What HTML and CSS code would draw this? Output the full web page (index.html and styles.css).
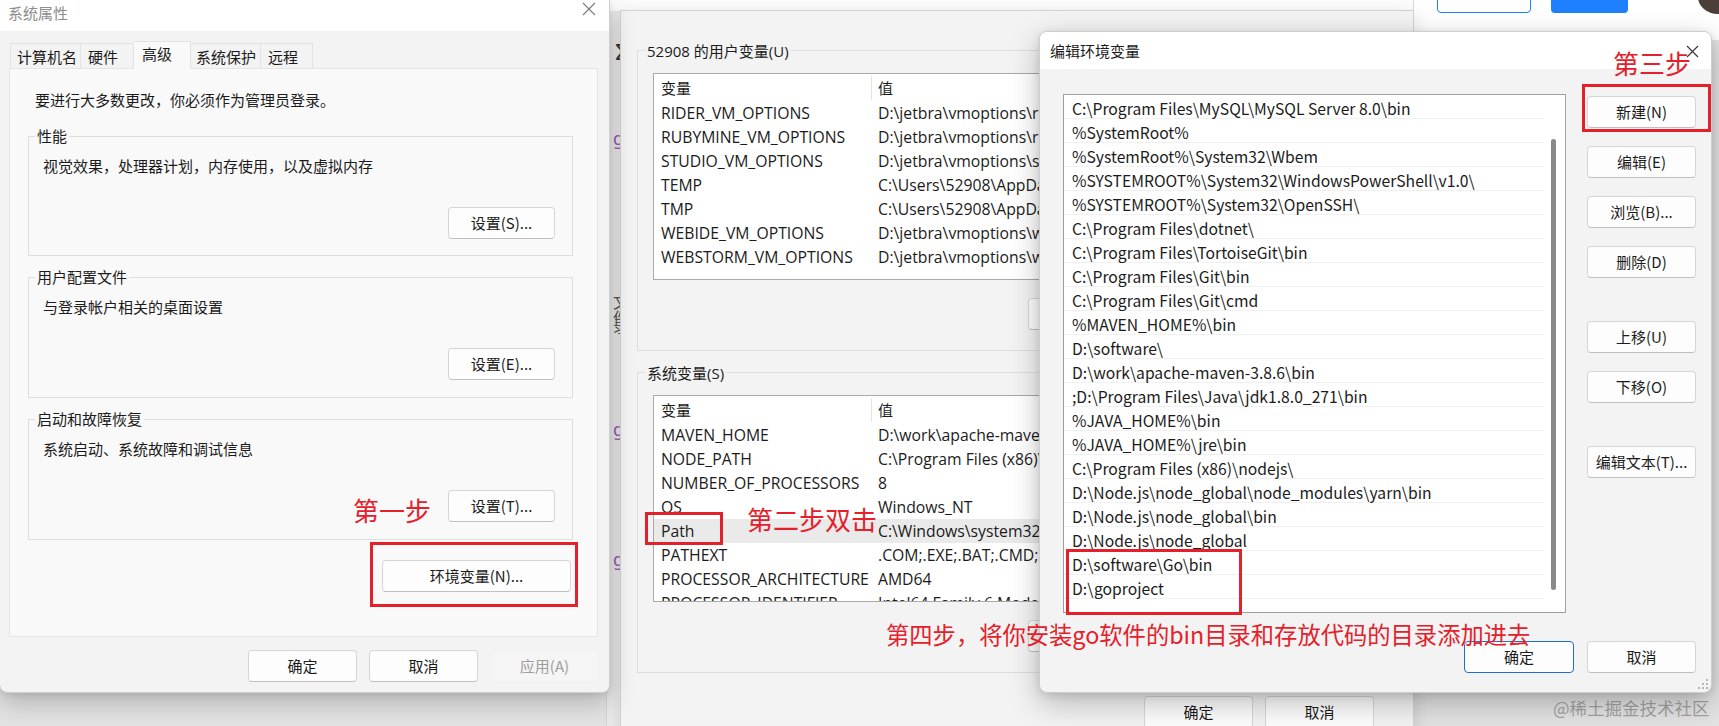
FILE: index.html
```html
<!DOCTYPE html>
<html lang="zh-CN">
<head>
<meta charset="utf-8">
<title>系统属性 - 环境变量</title>
<link rel="stylesheet" href="styles.css">
</head>
<body>
<div class="desk">

  <div class="back-strip">
    <span class="sigma">Σ</span>
    <span class="ge g1">ge</span>
    <span class="frag f1">文件</span>
    <span class="frag f2">录</span>
    <span class="ge g2">ge</span>
    <span class="ge g3">ge</span>
  </div>

  <div class="top-band"></div>

  <div class="web-top">
    <span class="web-btn outline"></span>
    <span class="web-btn solid"></span>
    <span class="avatar"></span>
  </div>

  <!-- 系统属性 -->
  <section class="win sysprop">
    <header class="sp-titlebar">
      <span class="sp-title">系统属性</span>
      <svg class="x-icon" width="14" height="14" viewBox="0 0 14 14"><path d="M1 1 L13 13 M13 1 L1 13" stroke="#7a7a7a" stroke-width="1.1" fill="none"/></svg>
    </header>
    <div class="sp-body">
      <nav class="tabs">
        <span class="tab t1">计算机名</span>
        <span class="tab t2">硬件</span>
        <span class="tab t3 active">高级</span>
        <span class="tab t4">系统保护</span>
        <span class="tab t5">远程</span>
      </nav>
      <div class="panel">
        <p class="note">要进行大多数更改，你必须作为管理员登录。</p>
        <div class="group">
          <span class="legend">性能</span>
          <p class="desc">视觉效果，处理器计划，内存使用，以及虚拟内存</p>
          <div class="grp-actions"><button class="btn">设置(S)...</button></div>
        </div>
        <div class="group">
          <span class="legend">用户配置文件</span>
          <p class="desc">与登录帐户相关的桌面设置</p>
          <div class="grp-actions"><button class="btn">设置(E)...</button></div>
        </div>
        <div class="group">
          <span class="legend">启动和故障恢复</span>
          <p class="desc">系统启动、系统故障和调试信息</p>
          <div class="grp-actions"><button class="btn">设置(T)...</button></div>
        </div>
        <div class="env-row"><button class="btn btn-env">环境变量(N)...</button></div>
      </div>
      <div class="sp-footer">
        <button class="btn btn-foot">确定</button>
        <button class="btn btn-foot">取消</button>
        <button class="btn btn-foot disabled">应用(A)</button>
      </div>
    </div>
  </section>

  <!-- 环境变量 -->
  <section class="win envvars">
    <div class="ev-group">
      <span class="ev-legend">52908 的用户变量(U)</span>
      <div class="lv">
        <div class="lv-head"><span class="c1 hd">变量</span><span class="c2">值</span></div>
        <div class="lv-row"><span class="c1">RIDER_VM_OPTIONS</span><span class="c2">D:\jetbra\vmoptions\rider.vmoptions</span></div>
        <div class="lv-row"><span class="c1">RUBYMINE_VM_OPTIONS</span><span class="c2">D:\jetbra\vmoptions\rubymine.vmoptions</span></div>
        <div class="lv-row"><span class="c1">STUDIO_VM_OPTIONS</span><span class="c2">D:\jetbra\vmoptions\studio.vmoptions</span></div>
        <div class="lv-row"><span class="c1">TEMP</span><span class="c2">C:\Users\52908\AppData\Local\Temp</span></div>
        <div class="lv-row"><span class="c1">TMP</span><span class="c2">C:\Users\52908\AppData\Local\Temp</span></div>
        <div class="lv-row"><span class="c1">WEBIDE_VM_OPTIONS</span><span class="c2">D:\jetbra\vmoptions\webide.vmoptions</span></div>
        <div class="lv-row"><span class="c1">WEBSTORM_VM_OPTIONS</span><span class="c2">D:\jetbra\vmoptions\webstorm.vmoptions</span></div>
      </div>
      <div class="ev-actions">
        <button class="btn btn-ev">新建(N)...</button>
        <button class="btn btn-ev">编辑(E)...</button>
        <button class="btn btn-ev">删除(D)</button>
      </div>
    </div>
    <div class="ev-group">
      <span class="ev-legend">系统变量(S)</span>
      <div class="lv">
        <div class="lv-head"><span class="c1 hd">变量</span><span class="c2">值</span></div>
        <div class="lv-row"><span class="c1">MAVEN_HOME</span><span class="c2">D:\work\apache-maven-3.8.6</span></div>
        <div class="lv-row"><span class="c1">NODE_PATH</span><span class="c2">C:\Program Files (x86)\nodejs\node_global</span></div>
        <div class="lv-row"><span class="c1">NUMBER_OF_PROCESSORS</span><span class="c2">8</span></div>
        <div class="lv-row"><span class="c1">OS</span><span class="c2">Windows_NT</span></div>
        <div class="lv-row sel"><span class="c1">Path</span><span class="c2">C:\Windows\system32;C:\Windows</span></div>
        <div class="lv-row"><span class="c1">PATHEXT</span><span class="c2">.COM;.EXE;.BAT;.CMD;.VBS;.VBE</span></div>
        <div class="lv-row"><span class="c1">PROCESSOR_ARCHITECTURE</span><span class="c2">AMD64</span></div>
        <div class="lv-row"><span class="c1">PROCESSOR_IDENTIFIER</span><span class="c2">Intel64 Family 6 Model 140</span></div>
      </div>
      <div class="ev-actions">
        <button class="btn btn-ev">新建(W)...</button>
        <button class="btn btn-ev">编辑(I)...</button>
        <button class="btn btn-ev">删除(L)</button>
      </div>
    </div>
    <div class="ev-footer">
      <button class="btn btn-ev">确定</button>
      <button class="btn btn-ev">取消</button>
    </div>
  </section>

  <!-- 编辑环境变量 -->
  <section class="win editenv">
    <header class="ee-titlebar">
      <span class="ee-title">编辑环境变量</span>
      <svg class="x-icon2" width="13" height="13" viewBox="0 0 13 13"><path d="M1 1 L12 12 M12 1 L1 12" stroke="#333" stroke-width="1.1" fill="none"/></svg>
    </header>
    <div class="ee-body">
      <div class="ee-list">
        <div class="ee-rows">
          <div class="ee-row">C:\Program Files\MySQL\MySQL Server 8.0\bin</div>
          <div class="ee-row">%SystemRoot%</div>
          <div class="ee-row">%SystemRoot%\System32\Wbem</div>
          <div class="ee-row">%SYSTEMROOT%\System32\WindowsPowerShell\v1.0\</div>
          <div class="ee-row">%SYSTEMROOT%\System32\OpenSSH\</div>
          <div class="ee-row">C:\Program Files\dotnet\</div>
          <div class="ee-row">C:\Program Files\TortoiseGit\bin</div>
          <div class="ee-row">C:\Program Files\Git\bin</div>
          <div class="ee-row">C:\Program Files\Git\cmd</div>
          <div class="ee-row">%MAVEN_HOME%\bin</div>
          <div class="ee-row">D:\software\</div>
          <div class="ee-row">D:\work\apache-maven-3.8.6\bin</div>
          <div class="ee-row">;D:\Program Files\Java\jdk1.8.0_271\bin</div>
          <div class="ee-row">%JAVA_HOME%\bin</div>
          <div class="ee-row">%JAVA_HOME%\jre\bin</div>
          <div class="ee-row">C:\Program Files (x86)\nodejs\</div>
          <div class="ee-row">D:\Node.js\node_global\node_modules\yarn\bin</div>
          <div class="ee-row">D:\Node.js\node_global\bin</div>
          <div class="ee-row">D:\Node.js\node_global</div>
          <div class="ee-row">D:\software\Go\bin</div>
          <div class="ee-row">D:\goproject</div>
          <div class="ee-row"></div>
        </div>
        <div class="ee-scroll"><span class="thumb"></span></div>
      </div>
      <div class="ee-buttons">
        <button class="btn btn-ee">新建(N)</button>
        <button class="btn btn-ee">编辑(E)</button>
        <button class="btn btn-ee">浏览(B)...</button>
        <button class="btn btn-ee">删除(D)</button>
        <button class="btn btn-ee gap">上移(U)</button>
        <button class="btn btn-ee">下移(O)</button>
        <button class="btn btn-ee gap">编辑文本(T)...</button>
      </div>
    </div>
    <div class="ee-footer">
      <button class="btn btn-ee default">确定</button>
      <button class="btn btn-ee">取消</button>
    </div>
    <svg class="grip" width="10" height="10" viewBox="0 0 10 10"><g fill="#b5b5b5"><rect x="8" y="0" width="2" height="2"/><rect x="4" y="4" width="2" height="2"/><rect x="8" y="4" width="2" height="2"/><rect x="0" y="8" width="2" height="2"/><rect x="4" y="8" width="2" height="2"/><rect x="8" y="8" width="2" height="2"/></g></svg>
  </section>

  <!-- annotations -->
  <div class="mark m1"></div>
  <div class="mark m2"></div>
  <div class="mark m3"></div>
  <div class="mark m4"></div>
  <span class="anno a1">第一步</span>
  <span class="anno a2">第二步双击</span>
  <span class="anno a3">第三步</span>
  <span class="anno a4">第四步，将你安装go软件的bin目录和存放代码的目录添加进去</span>

  <span class="watermark">@稀土掘金技术社区</span>
</div>
</body>
</html>
```

FILE: styles.css
```css
* { box-sizing: border-box; margin: 0; padding: 0; }
body {
  margin: 0;
  background: #e4e4e4;
  font-family: "Noto Sans CJK SC", "Noto Sans", sans-serif;
  color: #1b1b1b;
}
button { font-family: inherit; cursor: default; }

.desk {
  position: relative;
  width: 1719px;
  height: 726px;
  overflow: hidden;
  background: #e3e3e3;
}

/* background window pieces */
.back-strip {
  position: absolute;
  left: 606px; top: 0;
  width: 20px; height: 726px;
  background: #ececec;
  border-left: 1px solid #d6d6d6;
}
.sigma { position: absolute; left: 7px; top: 42px; font: 22px/22px "DejaVu Sans", sans-serif; color: #333; }
.ge { position: absolute; left: 6px; font: 18px/18px "Noto Sans", sans-serif; color: #9b59b6; }
.g1 { top: 129px; } .g2 { top: 420px; } .g3 { top: 550px; }
.frag { position: absolute; left: 6px; font: 16px/16px "Noto Sans CJK SC", sans-serif; color: #555; }
.f1 { top: 293px; } .f2 { top: 317px; }

.top-band {
  position: absolute;
  left: 610px; top: 0;
  width: 803px; height: 11px;
  background: #fdfdfd;
}
.web-top {
  position: absolute;
  left: 1413px; top: 0;
  width: 306px; height: 40px;
  background: #fff;
  border-left: 1px solid #d9d9d9;
  display: flex;
  align-items: flex-start;
  padding-left: 23px;
}
.web-btn { display: block; flex-shrink: 0; height: 33px; margin-top: -20px; border-radius: 4px; }
.web-btn.outline { width: 94px; border: 1px solid #1e80ff; }
.web-btn.solid { width: 77px; margin-left: 20px; background: #1e80ff; }
.avatar { display: block; flex-shrink: 0; width: 40px; height: 34px; margin: -20px 0 0 70px; border-radius: 50%; background: #4b3d37; }

/* windows */
.win { position: absolute; }

/* ---------- 系统属性 ---------- */
.sysprop {
  left: 0; top: 0;
  width: 610px; height: 693px;
  background: #f3f3f3;
  border-right: 1px solid #cfcfcf;
  border-bottom: 1px solid #cfcfcf;
  border-radius: 0 0 8px 8px;
  box-shadow: 0 10px 26px rgba(0,0,0,0.22), 0 2px 6px rgba(0,0,0,0.08);
  display: flex;
  flex-direction: column;
  z-index: 3;
}
.sp-titlebar {
  height: 31px;
  background: #fff;
  display: flex;
  justify-content: space-between;
  padding: 3px 13px 0 8px;
}
.sp-title { font-size: 15px; line-height: 20px; color: #8c8c8c; }
.x-icon { margin-top: -1px; }

.sp-body { flex: 1; display: flex; flex-direction: column; padding: 0 10px 10px 9px; }
.tabs { display: flex; align-items: flex-end; height: 25px; margin: 12px 0 0 1px; }
.tab {
  height: 25px;
  border: 1px solid #e2e2e2;
  border-bottom: none;
  border-left: none;
  background: #f3f3f3;
  padding-left: 6px;
  font-size: 15px;
  line-height: 26px;
  color: #1b1b1b;
}
.t1 { width: 71px; border-left: 1px solid #e2e2e2; }
.t2 { width: 53px; padding-left: 7px; }
.t3 { width: 57px; padding-left: 8px; }
.t4 { width: 70px; padding-left: 5px; }
.t5 { width: 52px; padding-left: 7px; }
.tab.active {
  height: 28px;
  margin-bottom: -1px;
  background: #f9f9f9;
  line-height: 24px;
  position: relative;
  z-index: 1;
}

.panel {
  width: 589px;
  height: 569px;
  background: #f9f9f9;
  border: 1px solid #e5e5e5;
  padding-top: 21px;
  display: flex;
  flex-direction: column;
}
.note { font-size: 15px; line-height: 20px; padding-left: 25px; }

.group {
  height: 120px;
  margin: 26px 24px 0 18px;
  border: 1px solid #dedede;
  display: flex;
  flex-direction: column;
}
.group + .group { height: 121px; margin-top: 21px; }
.legend {
  align-self: flex-start;
  margin: -11px 0 0 6px;
  padding: 0 2px;
  background: #f9f9f9;
  font-size: 15px;
  line-height: 20px;
}
.desc { margin-top: 10px; padding-left: 14px; font-size: 15px; line-height: 20px; }
.grp-actions { display: flex; justify-content: flex-end; margin-top: 31px; padding-right: 17px; }

.btn {
  height: 32px;
  width: 107px;
  background: #fdfdfd;
  border: 1px solid #d6d6d6;
  border-bottom-color: #c0c0c0;
  border-radius: 4px;
  font-size: 15px;
  line-height: 20px;
  color: #1b1b1b;
}
.env-row { display: flex; justify-content: flex-end; margin-top: 20px; padding-right: 26px; }
.btn-env { width: 189px; }

.sp-footer { display: flex; justify-content: flex-end; gap: 12px; margin-top: 13px; }
.btn-foot { width: 109px; }
.btn.disabled { background: #f5f5f5; border-color: #f0f0f0; color: #9d9d9d; }

/* ---------- 环境变量 ---------- */
.envvars {
  left: 620px; top: 10px;
  width: 794px; height: 760px;
  background: #f3f3f3;
  border: 1px solid #d2d2d2;
  box-shadow: 0 4px 18px rgba(0,0,0,0.12);
  padding: 39px 16px 0 16px;
  z-index: 2;
}
.ev-group {
  border: 1px solid #dedede;
  padding: 0 15px 20px 15px;
  display: flex;
  flex-direction: column;
}
.ev-group + .ev-group { margin-top: 21px; }
.ev-legend {
  align-self: flex-start;
  margin: -10px 0 0 -8px;
  padding: 0 2px;
  background: #f3f3f3;
  font-family: "Open Sans", "Noto Sans CJK SC", sans-serif;
  font-size: 15px;
  line-height: 20px;
}
.lv {
  margin-top: 12px;
  height: 207px;
  background: #fff;
  border: 1px solid #a9a9a9;
  overflow: hidden;
  font-family: "Open Sans", "Noto Sans CJK SC", sans-serif;
  font-size: 15.75px;
}
.lv-head, .lv-row { display: grid; grid-template-columns: 218px 1fr; white-space: nowrap; }
.lv-head { height: 27px; line-height: 27px; font-family: "Noto Sans CJK SC", sans-serif; font-size: 15px; }
.lv-row { height: 24px; line-height: 24px; }
.c1 { padding-left: 7px; overflow: hidden; }
.c2 { padding-left: 6px; overflow: hidden; }
.c1.hd { border-right: 1px solid #e3e3e3; margin: 2px 0 1px; line-height: 23px; }
.lv-row.sel { background: #eaeaea; }
.ev-actions { display: flex; justify-content: flex-end; gap: 13px; margin-top: 18px; }
.btn-ev { width: 109px; }
.ev-footer { display: flex; justify-content: flex-end; gap: 12px; margin-top: 23px; padding-right: 23px; }

/* ---------- 编辑环境变量 ---------- */
.editenv {
  left: 1039px; top: 31px;
  width: 673px; height: 662px;
  background: #f3f3f3;
  border: 1px solid #cdcdcd;
  border-radius: 8px;
  box-shadow: 0 10px 30px rgba(0,0,0,0.25), 0 2px 8px rgba(0,0,0,0.1);
  overflow: hidden;
  display: flex;
  flex-direction: column;
  z-index: 4;
}
.ee-titlebar {
  height: 37px;
  background: #fff;
  display: flex;
  justify-content: space-between;
  padding: 9px 12px 0 10px;
}
.ee-title { font-size: 15px; line-height: 20px; }
.x-icon2 { margin-top: 4px; }
.ee-body {
  display: grid;
  grid-template-columns: 503px 109px;
  column-gap: 21px;
  padding: 25px 0 0 23px;
}
.ee-list {
  height: 519px;
  background: #fff;
  border: 1px solid #9f9f9f;
  display: grid;
  grid-template-columns: 1fr 21px;
  overflow: hidden;
}
.ee-row {
  height: 24px;
  line-height: 28px;
  border-bottom: 1px solid #f0f0f0;
  padding-left: 8px;
  font-size: 15.7px;
  white-space: nowrap;
  color: #1b1b1b;
}
.ee-scroll { padding: 44px 0 0 7px; }
.thumb { display: block; width: 5px; height: 451px; border-radius: 3px; background: #8a8a8a; }
.ee-buttons { display: flex; flex-direction: column; gap: 18px; padding-top: 2px; }
.btn-ee { width: 109px; }
.ee-buttons .gap { margin-top: 25px; }
.ee-footer { display: flex; justify-content: flex-end; gap: 13px; margin-top: 28px; padding-right: 15px; }
.btn-ee.default { width: 110px; border: 1px solid #1f6fc5; }
.grip { position: absolute; right: 3px; bottom: 3px; }

/* ---------- annotations ---------- */
.mark { position: absolute; border: 3px solid #e4212b; z-index: 10; }
.m1 { left: 370px; top: 542px; width: 208px; height: 65px; }
.m2 { left: 645px; top: 512px; width: 78px; height: 33px; }
.m3 { left: 1582px; top: 84px; width: 129px; height: 48px; }
.m4 { left: 1066px; top: 549px; width: 176px; height: 66px; }
.anno {
  position: absolute;
  z-index: 11;
  color: #e4212b;
  font-family: "Noto Sans CJK SC", sans-serif;
  font-size: 26px;
  line-height: 28px;
  white-space: nowrap;
}
.a1 { left: 353px; top: 496px; }
.a2 { left: 747px; top: 505px; }
.a3 { left: 1613px; top: 49px; }
.a4 { left: 886px; top: 620px; font-size: 23.3px; }

.watermark {
  position: absolute;
  left: 1553px; top: 697px;
  font-size: 17.5px;
  line-height: 22px;
  color: rgba(140,140,140,0.75);
  z-index: 1;
}
```
